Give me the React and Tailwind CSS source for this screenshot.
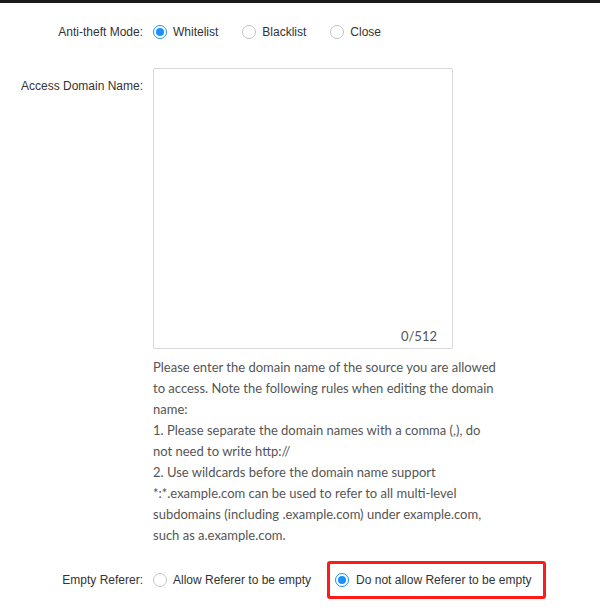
const Radio = ({ checked }) => (
  <span
    className={
      "inline-flex h-[14px] w-[14px] shrink-0 items-center justify-center rounded-full border bg-white " +
      (checked ? "border-[#1890ff]" : "border-[#c4c4c4]")
    }
  >
    {checked && <span className="h-[8px] w-[8px] rounded-full bg-[#1890ff]" />}
  </span>
);

const Option = ({ label, checked, className = "" }) => (
  <label className={"flex items-center gap-[6px] " + className}>
    <Radio checked={checked} />
    <span>{label}</span>
  </label>
);

export default function App() {
  return (
    <div
      className="min-h-[609px] w-[600px] bg-white text-[12px] text-[#333]"
      style={{ fontFamily: '"Liberation Sans", Arial, sans-serif' }}
    >
      <div className="h-[3px] bg-[#1a1a1a]" />

      <div className="mt-[22px] flex h-[14px] items-center">
        <div className="w-[143px] text-right">Anti-theft Mode:</div>
        <div className="ml-[10px] flex items-center">
          <Option label="Whitelist" checked className="mr-[24px]" />
          <Option label="Blacklist" className="mr-[24px]" />
          <Option label="Close" />
        </div>
      </div>

      <div className="mt-[29px] flex items-start">
        <div className="w-[143px] pt-[9px] text-right">Access Domain Name:</div>
        <div className="ml-[10px] w-[346px]">
          <div className="relative h-[281px] w-[300px] rounded-[2px] border border-[#d9d9d9]">
            <span className="absolute bottom-[2px] right-[15px] text-[13px] text-[#555]" style={{ fontFamily: 'Lato, sans-serif' }}>
              0/512
            </span>
          </div>
          <p
            className="mt-[8px] text-[13px] leading-[21px] text-[#555]"
            style={{ fontFamily: 'Lato, sans-serif' }}
          >
            Please enter the domain name of the source you are allowed to access. Note the following rules when editing the domain name:
            <br />
            1. Please separate the domain names with a comma (,), do not need to write http://
            <br />
            2. Use wildcards before the domain name support *:*.example.com can be used to refer to all multi-level subdomains (including .example.com) under example.com, such as a.example.com.
          </p>
        </div>
      </div>

      <div className="mt-[15px] flex items-center">
        <div className="w-[143px] text-right">Empty Referer:</div>
        <div className="ml-[10px] flex items-center">
          <Option label="Allow Referer to be empty" />
          <div className="ml-[16px] flex h-[38px] items-center rounded-[3px] border-[3px] border-[#ff1a1a] pl-[5px] pr-[12px]">
            <Option label="Do not allow Referer to be empty" checked className="gap-[7px]" />
          </div>
        </div>
      </div>
    </div>
  );
}
